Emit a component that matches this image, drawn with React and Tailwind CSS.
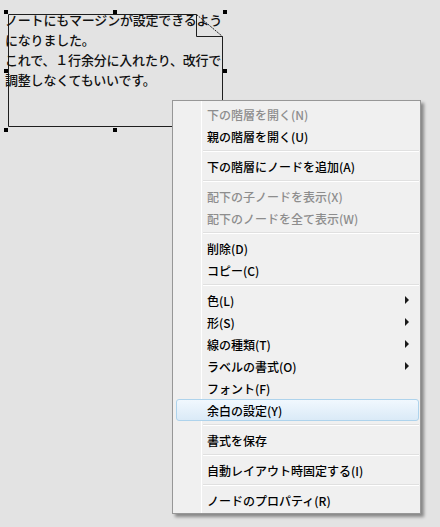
const FONT = "font-['Noto_Sans_CJK_JP','Noto_Sans',sans-serif]";

const menu = [
  { label: "下の階層を開く(N)", disabled: true },
  { label: "親の階層を開く(U)" },
  { sep: true },
  { label: "下の階層にノードを追加(A)" },
  { sep: true },
  { label: "配下の子ノードを表示(X)", disabled: true },
  { label: "配下のノードを全て表示(W)", disabled: true },
  { sep: true },
  { label: "削除(D)" },
  { label: "コピー(C)" },
  { sep: true },
  { label: "色(L)", sub: true },
  { label: "形(S)", sub: true },
  { label: "線の種類(T)", sub: true },
  { label: "ラベルの書式(O)", sub: true },
  { label: "フォント(F)" },
  { label: "余白の設定(Y)", hover: true },
  { sep: true },
  { label: "書式を保存" },
  { sep: true },
  { label: "自動レイアウト時固定する(I)" },
  { sep: true },
  { label: "ノードのプロパティ(R)" },
];

const handles = [
  [4, 10], [113, 10], [223, 10],
  [4, 69], [223, 69],
  [4, 128], [113, 128], [223, 128],
];

function NoteShape() {
  return (
    <svg className="absolute left-0 top-0" width="240" height="140">
      <path
        d="M8.5 14.5 H196.5 V36.5 H222.5 V126.5 H8.5 Z"
        fill="none"
        stroke="#1e1e1e"
        strokeWidth="1"
      />
      <path d="M196.5 14.5 L222.5 36.5" stroke="#1e1e1e" strokeWidth="1" strokeDasharray="2 1" />
      {handles.map(([x, y], i) => (
        <rect key={i} x={x} y={y} width="4" height="4" fill="#000" />
      ))}
    </svg>
  );
}

function MenuItem({ item }) {
  if (item.sep) {
    return (
      <div className="flex h-[8px] flex-col justify-center pl-[30px] pr-[1px]">
        <div className="h-px bg-[#e0e0e0]" />
        <div className="h-px bg-white" />
      </div>
    );
  }
  return (
    <div
      className={
        item.hover
          ? "ml-[3px] mr-[1px] flex h-[22px] items-center justify-between rounded-[3px] border border-[#aed3ec] bg-gradient-to-b from-[#f1f8fe] to-[#daeaf7] pl-[30px] pr-[9px]"
          : "ml-[3px] mr-[1px] flex h-[22px] items-center justify-between rounded-[3px] border border-transparent pl-[30px] pr-[9px]"
      }
    >
      <span
        className={
          item.disabled
            ? "pt-[2px] text-[12px] font-medium leading-[20px] text-[#8d8d8d]"
            : "pt-[2px] text-[12px] font-medium leading-[20px] text-black"
        }
      >
        {item.label}
      </span>
      {item.sub && (
        <span className="h-0 w-0 border-y-[4px] border-l-[4px] border-y-transparent border-l-[#1a1a1a]" />
      )}
    </div>
  );
}

export default function App() {
  return (
    <div className={`relative h-[527px] w-[440px] overflow-hidden bg-[#e3e3e3] ${FONT}`}>
      <NoteShape />
      <div className="absolute left-[5px] top-[10px] text-[13px] font-medium leading-[20px] tracking-[-0.2px] text-[#111]">
        ノートにもマージンが設定できるよう
        <br />
        になりました。
        <br />
        これで、１行余分に入れたり、改行で
        <br />
        調整しなくてもいいです。
      </div>

      <div className="absolute left-[172px] top-[100px] w-[249px] border border-[#979797] bg-[#f0f0f0] py-[2px] shadow-[3px_3px_3px_rgba(0,0,0,0.4)]">
        <div className="absolute bottom-0 left-[28px] top-0 w-px border-r border-r-white bg-[#e2e3e3]" />
        <div className="relative flex flex-col">
          {menu.map((item, i) => (
            <MenuItem key={i} item={item} />
          ))}
        </div>
      </div>
    </div>
  );
}
